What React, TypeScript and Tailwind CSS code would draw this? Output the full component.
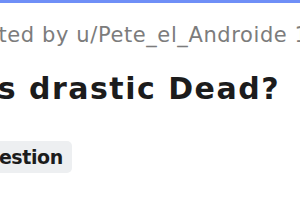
import React from "react";

const App = () => {
    return (
        <div className="w-[300px] h-[200px] overflow-hidden bg-white" style={{ fontFamily: '"DejaVu Sans", sans-serif' }}>
            <div className="h-[3px] bg-[#6f8ff7]" />
            <div className="w-[600px]">
                <p className="-ml-[39px] mt-[18px] text-[21px] leading-[28px] tracking-[0.6px] text-[#7c7c7c] whitespace-nowrap">
                    Posted by u/Pete_el_Androide 1 year ago
                </p>
                <h1 className="-ml-[15px] mt-[21px] text-[30px] leading-[38px] font-bold tracking-[1.5px] text-[#1c1c1c] whitespace-nowrap">
                    Is drastic Dead?
                </h1>
                <div className="-ml-[39px] mt-[33px] flex">
                    <span className="rounded-[5px] bg-[#edeff1] px-[9px] h-[32px] flex items-center text-[19px] font-bold tracking-[-0.4px] text-[#1c1c1c]">
                        Question
                    </span>
                </div>
            </div>
        </div>
    );
};

export default App;
